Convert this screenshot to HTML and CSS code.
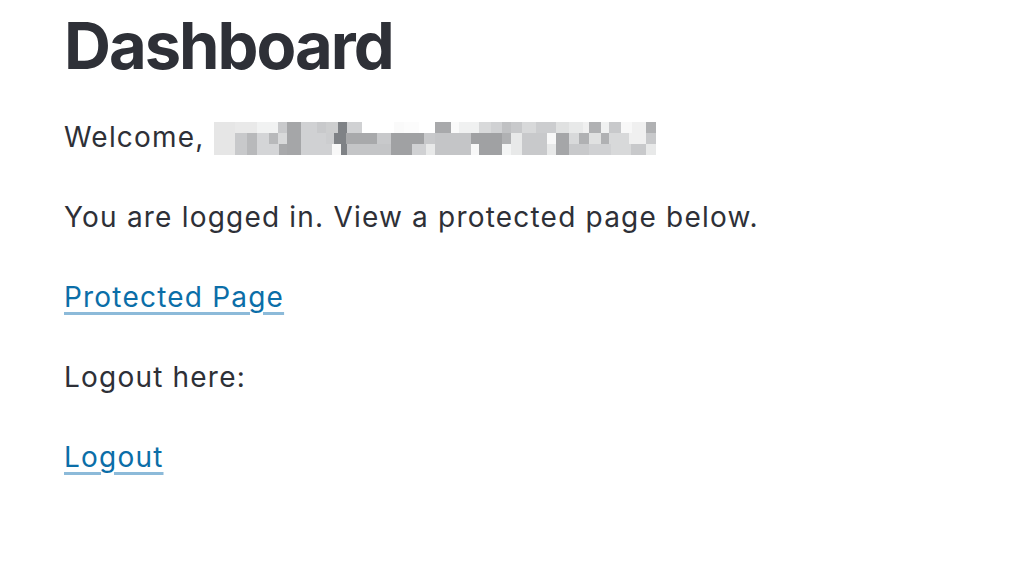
FILE: index.html
```html
<!DOCTYPE html>
<html lang="en">
<head>
<meta charset="utf-8">
<title>Dashboard</title>
<link rel="stylesheet" href="styles.css">
</head>
<body>
<main class="page">
  <h1 class="title">Dashboard</h1>
  <p class="line">Welcome, <span class="redacted" aria-label="hidden name"></span></p>
  <p class="line">You are logged in. View a protected page below.</p>
  <p class="line"><a class="link" href="#">Protected Page</a></p>
  <p class="line">Logout here:</p>
  <p class="line"><a class="link" href="#">Logout</a></p>
</main>
</body>
</html>
```

FILE: styles.css
```css
html, body {
  margin: 0;
  padding: 0;
  background: #ffffff;
}

body {
  font-family: Inter, "Liberation Sans", Arial, sans-serif;
  color: #2e3037;
}

.page {
  padding: 0 0 0 64px;
  display: flex;
  flex-direction: column;
}

.title {
  margin: 0 0 5px 0;
  font-size: 65px;
  font-weight: 700;
  line-height: 92px;
  letter-spacing: -2px;
}

.line {
  margin: 0;
  font-size: 28px;
  line-height: 80px;
  letter-spacing: 1.2px;
}

.link {
  color: #0b6ea8;
  text-decoration: underline;
  text-decoration-color: #8cbad9;
  text-decoration-thickness: 3px;
  text-underline-offset: 5px;
}

.redacted {
  display: inline-block;
  width: 442px;
  height: 33px;
  margin-left: 0;
  vertical-align: -8px;
  background-repeat: no-repeat;
  background-size: 100% 11px;
  background-position: 0 0, 0 11px, 0 22px;
  background-image:
    linear-gradient(to right,
      #e6e6e6 0 21px, #e9e9e9 21px 43px, #f1f2f2 43px 64px, #c8c9cb 64px 73px,
      #a5a6a8 73px 87px, #d0d1d3 87px 103px, #c8c9cb 103px 112px, #cdcecf 112px 124px,
      #7f8286 124px 133px, #d0d1d3 133px 148px, #ffffff 148px 180px, #fafafa 180px 190px,
      #fcfcfc 190px 205px, #ffffff 205px 221px, #a8a9ab 221px 237px, #fafafa 237px 245px,
      #f0f1f1 245px 265px, #d8d9da 265px 277px, #d0d1d3 277px 288px, #c0c1c3 288px 297px,
      #c8c9cb 297px 308px, #d8d9da 308px 322px, #cccdcf 322px 342px, #e0e1e1 342px 355px,
      #e8e9e9 355px 369px, #f0f0f0 369px 375px, #b0b1b3 375px 387px, #f0f1f1 387px 395px,
      #c8c9cb 395px 407px, #f8f8f8 407px 418px, #f0f0f0 418px 432px, #b0b1b3 432px 442px),
    linear-gradient(to right,
      #e6e6e6 0 21px, #c8c9cb 21px 33px, #b8b9bb 33px 43px, #d4d5d7 43px 55px,
      #b8b9bb 55px 64px, #d8d9da 64px 73px, #a5a6a8 73px 87px, #d0d1d3 87px 112px,
      #cccdcf 112px 120px, #7f8286 120px 132px, #a8a9ab 132px 163px, #c8c9cb 163px 177px,
      #a0a1a3 177px 210px, #c8c9cb 210px 221px, #c4c5c7 221px 257px, #a0a1a3 257px 288px,
      #b0b1b3 288px 297px, #e8e9e9 297px 308px, #c8c9cb 308px 333px, #f8f8f8 333px 342px,
      #a5a6a8 342px 355px, #d8d9da 355px 365px, #b0b1b3 365px 375px, #e0e1e1 375px 387px,
      #b0b1b3 387px 395px, #d8d9da 395px 415px, #f0f0f0 415px 432px, #c8c9cb 432px 442px),
    linear-gradient(to right,
      #e6e6e6 0 21px, #c8c9cb 21px 33px, #b8b9bb 33px 43px, #d4d5d7 43px 65px,
      #a8a9ab 65px 73px, #a5a6a8 73px 87px, #d0d1d3 87px 118px, #f8f8f8 118px 127px,
      #7f8286 127px 133px, #c4c5c7 133px 177px, #a0a1a3 177px 198px, #d0d1d3 198px 212px,
      #e8e9e9 212px 221px, #c4c5c7 221px 257px, #f8f8f8 257px 265px, #a0a1a3 265px 288px,
      #f4f5f5 288px 297px, #e8e9e9 297px 308px, #c8c9cb 308px 333px, #e8e9e9 333px 342px,
      #a5a6a8 342px 355px, #c8c9cb 355px 375px, #d0d1d3 375px 397px, #d8d9da 397px 417px,
      #c8c9cb 417px 432px, #e8e9e9 432px 442px);
}
```
